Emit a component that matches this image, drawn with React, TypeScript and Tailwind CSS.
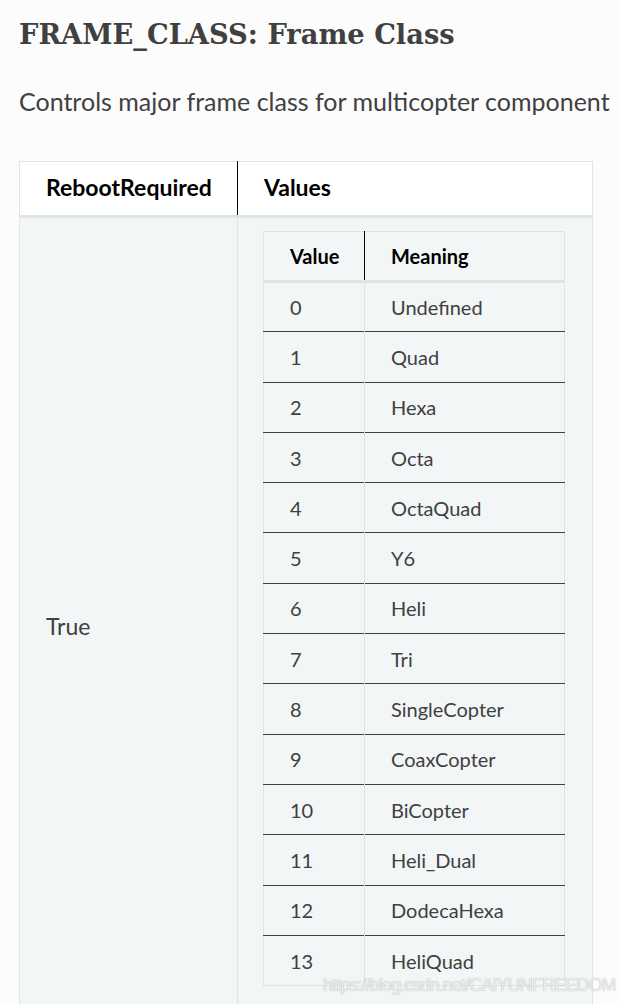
const rows: [string, string][] = [
  ["0", "Undefined"],
  ["1", "Quad"],
  ["2", "Hexa"],
  ["3", "Octa"],
  ["4", "OctaQuad"],
  ["5", "Y6"],
  ["6", "Heli"],
  ["7", "Tri"],
  ["8", "SingleCopter"],
  ["9", "CoaxCopter"],
  ["10", "BiCopter"],
  ["11", "Heli_Dual"],
  ["12", "DodecaHexa"],
  ["13", "HeliQuad"],
]

export default function App() {
  return (
    <div className="relative h-[1004px] overflow-hidden bg-[#fcfcfc] font-['Lato',sans-serif] text-[#404040]">
      <div className="pl-[19px] pt-[14px]">
        <h1 className="font-['DejaVu_Serif',serif] text-[27.3px] font-bold leading-[40px] text-[#404040]">
          FRAME_CLASS: Frame Class
        </h1>
        <p className="mt-[33px] text-[25px] leading-[28px]">
          Controls major frame class for multicopter component
        </p>

        <table className="mt-[46px] w-[574px] table-fixed border-collapse border border-[#e1e4e5] text-[23px]">
          <thead>
            <tr className="bg-white border-b-[3px] border-[#e1e4e5]">
              <th className="h-[55px] w-[218px] whitespace-nowrap border-r border-black pl-[26px] pr-0 pb-[2px] text-left font-bold text-black">
                RebootRequired
              </th>
              <th className="h-[55px] px-[26px] pb-[2px] text-left font-bold text-black">
                Values
              </th>
            </tr>
          </thead>
          <tbody>
            <tr className="bg-[#f3f6f6]">
              <td className="h-[818px] border-r border-[#e1e4e5] px-[26px] align-middle">
                True
              </td>
              <td className="pl-[25px] pr-[26px] pt-[13px] pb-[40px] align-top">
                <table className="w-[302px] table-fixed border-collapse border border-[#e1e4e5] text-[20px]">
                  <thead>
                    <tr className="border-b-[3px] border-[#e1e4e5]">
                      <th className="h-[50px] w-[101px] border-r border-black px-[26px] text-left font-bold text-black">
                        Value
                      </th>
                      <th className="h-[50px] px-[26px] text-left font-bold text-black">
                        Meaning
                      </th>
                    </tr>
                  </thead>
                  <tbody>
                    {rows.map(([v, m], i) => (
                      <tr
                        key={v}
                        className={i === 0 ? "" : "border-t border-[#404040]"}
                      >
                        <td className="h-[50.3px] border-r border-[#e1e4e5] px-[26px] leading-[24px]">
                          {v}
                        </td>
                        <td className="h-[50.3px] px-[26px] leading-[24px]">{m}</td>
                      </tr>
                    ))}
                  </tbody>
                </table>
              </td>
            </tr>
          </tbody>
        </table>
      </div>

      {/* csdn watermark */}
      <div className="absolute left-[323px] top-[974px] font-['Liberation_Sans',sans-serif] text-[18px] leading-[22px] tracking-[-0.9px] whitespace-nowrap text-[#eeeeee] [text-shadow:0_0_1px_rgba(0,0,0,0.35)]">
        https://blog.csdn.net/CAIYUNFREEDOM
      </div>
    </div>
  )
}
